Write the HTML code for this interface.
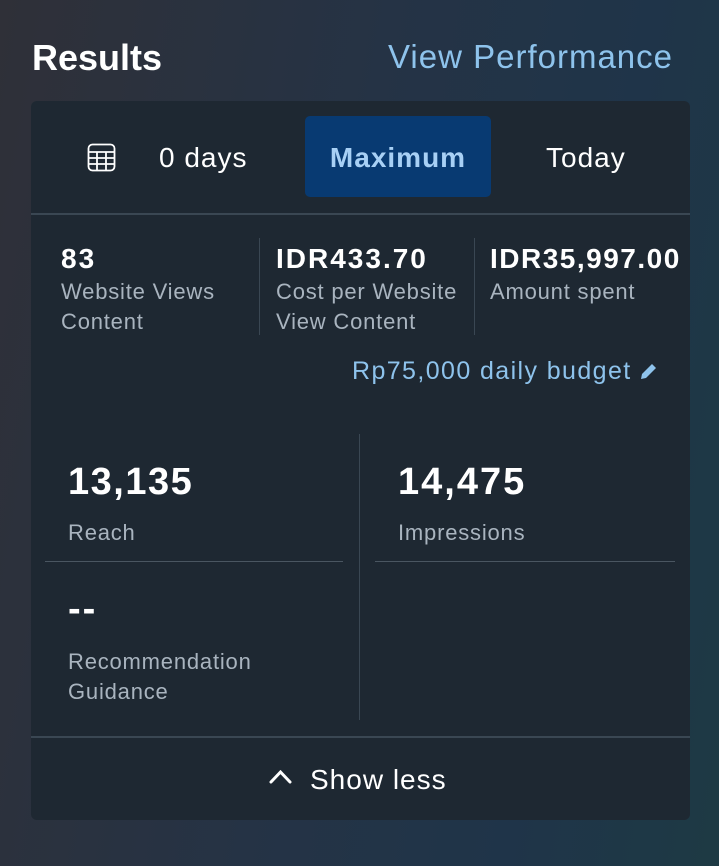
<!DOCTYPE html>
<html><head><meta charset="utf-8"><style>
*{margin:0;padding:0;box-sizing:border-box}
html,body{width:719px;height:866px;overflow:hidden}
body{font-family:"Liberation Sans",sans-serif;background:linear-gradient(100deg,#2f3038 0%,#253345 45%,#1f3449 75%,#1e3a44 100%);position:relative;color:#fff}
.a{position:absolute;white-space:nowrap}
.card{position:absolute;left:31px;top:101px;width:659px;height:719px;background:#1e2832;border-radius:6px}
.lbl{color:#a9b4bf;font-size:22px;line-height:30px;letter-spacing:0.8px}
.num{font-weight:bold;font-size:28px;letter-spacing:2px}
.big{font-weight:bold;font-size:38px;letter-spacing:2px}
.t{font-size:28px;letter-spacing:1px}
</style></head><body>
<div class="a" style="left:32px;top:37px;font-size:36px;font-weight:bold">Results</div>
<div class="a" style="left:388px;top:38px;font-size:33px;letter-spacing:1px;color:#8ec3ec">View Performance</div>
<div class="card"></div>
<svg class="a" style="left:87px;top:143px" width="29" height="29" viewBox="0 0 29 29" fill="none" stroke="#fff" stroke-width="1.8"><rect x="1.5" y="1.5" width="26" height="26" rx="4"/><line x1="1.5" y1="9" x2="27.5" y2="9"/><line x1="1.5" y1="15" x2="27.5" y2="15"/><line x1="1.5" y1="21" x2="27.5" y2="21"/><line x1="10" y1="9" x2="10" y2="27.5"/><line x1="19" y1="9" x2="19" y2="27.5"/></svg>
<div class="a t" style="left:159px;top:142px">0 days</div>
<div class="a t" style="left:305px;top:116px;width:186px;height:81px;background:#083a72;border-radius:5px;color:#a8d0f5;font-weight:bold;text-align:center;line-height:83px">Maximum</div>
<div class="a t" style="left:546px;top:142px">Today</div>
<div class="a" style="left:31px;top:213px;width:659px;height:2px;background:#3a4753"></div>
<div class="a num" style="left:61px;top:243px">83</div>
<div class="a lbl" style="left:61px;top:277px">Website Views<br>Content</div>
<div class="a" style="left:259px;top:238px;width:1px;height:97px;background:#3a4753"></div>
<div class="a num" style="left:276px;top:243px">IDR433.70</div>
<div class="a lbl" style="left:276px;top:277px">Cost per Website<br>View Content</div>
<div class="a" style="left:474px;top:238px;width:1px;height:97px;background:#3a4753"></div>
<div class="a num" style="left:490px;top:243px;letter-spacing:1.5px">IDR35,997.00</div>
<div class="a lbl" style="left:490px;top:277px">Amount spent</div>
<div class="a" style="left:352px;top:357px;font-size:25px;letter-spacing:1.4px;color:#8ec3ec">Rp75,000 daily budget</div>
<svg class="a" style="left:638px;top:361px" width="21" height="21" viewBox="0 0 21 21"><path d="M3 18 L4 13 L14 3 L18 7 L8 17 Z" fill="#8ec3ec"/></svg>
<div class="a" style="left:359px;top:434px;width:1px;height:286px;background:#3a4753"></div>
<div class="a big" style="left:68px;top:461px;letter-spacing:1.5px">13,135</div>
<div class="a lbl" style="left:68px;top:518px">Reach</div>
<div class="a big" style="left:398px;top:461px">14,475</div>
<div class="a lbl" style="left:398px;top:518px">Impressions</div>
<div class="a" style="left:45px;top:561px;width:298px;height:1px;background:#4a5661"></div>
<div class="a" style="left:375px;top:561px;width:300px;height:1px;background:#4a5661"></div>
<div class="a big" style="left:68px;top:588px">--</div>
<div class="a lbl" style="left:68px;top:647px">Recommendation<br>Guidance</div>
<div class="a" style="left:31px;top:736px;width:659px;height:2px;background:#3a4753"></div>
<svg class="a" style="left:268px;top:768px" width="25" height="17" viewBox="0 0 25 17" fill="none" stroke="#fff" stroke-width="3" stroke-linecap="round"><path d="M3 14 L12.5 4 L22 14"/></svg>
<div class="a t" style="left:310px;top:764px">Show less</div>
</body></html>
